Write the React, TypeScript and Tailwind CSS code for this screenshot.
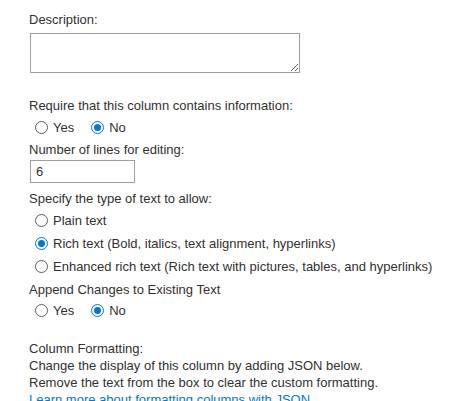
import { useState } from 'react';

function Radio({ label, checked, onClick }: { label: string; checked: boolean; onClick: () => void }) {
  return (
    <label className="inline-flex items-center gap-[5px] cursor-pointer" onClick={onClick}>
      <span
        className={`w-[13px] h-[13px] rounded-full border flex items-center justify-center ${
          checked ? 'border-[#0078d4]' : 'border-[#605e5c]'
        }`}
      >
        {checked && <span className="w-[7px] h-[7px] rounded-full bg-[#0078d4]" />}
      </span>
      <span>{label}</span>
    </label>
  );
}

export default function App() {
  const [required, setRequired] = useState('no');
  const [textType, setTextType] = useState('rich');
  const [append, setAppend] = useState('no');
  const [lines, setLines] = useState('6');

  return (
    <div
      className="min-h-screen bg-white text-[#323130] text-[13px] leading-[17px] pl-[29px] pt-[11px]"
      style={{ fontFamily: '"Liberation Sans", Arial, sans-serif' }}
    >
      {/* Description */}
      <div>Description:</div>
      <textarea className="block mt-[5px] ml-px w-[270px] h-[40px] border border-[#a19f9d] outline-none px-2 py-1" />

      {/* Required */}
      <div className="mt-[24px]">Require that this column contains information:</div>
      <div className="flex items-center h-[22px] mt-[2px] pl-[6px] gap-[17px]">
        <Radio label="Yes" checked={required === 'yes'} onClick={() => setRequired('yes')} />
        <Radio label="No" checked={required === 'no'} onClick={() => setRequired('no')} />
      </div>

      {/* Lines */}
      <div className="mt-[3px]">Number of lines for editing:</div>
      <input
        value={lines}
        onChange={(e) => setLines(e.target.value)}
        className="block mt-[2px] ml-px w-[105px] h-[23px] border border-[#a19f9d] outline-none px-[5px]"
      />

      {/* Text type */}
      <div className="mt-[7px]">Specify the type of text to allow:</div>
      <div className="flex flex-col pl-[6px] mt-[2px]">
        <div className="flex items-center h-[23px]">
          <Radio label="Plain text" checked={textType === 'plain'} onClick={() => setTextType('plain')} />
        </div>
        <div className="flex items-center h-[23px]">
          <Radio
            label="Rich text (Bold, italics, text alignment, hyperlinks)"
            checked={textType === 'rich'}
            onClick={() => setTextType('rich')}
          />
        </div>
        <div className="flex items-center h-[23px]">
          <Radio
            label="Enhanced rich text (Rich text with pictures, tables, and hyperlinks)"
            checked={textType === 'enhanced'}
            onClick={() => setTextType('enhanced')}
          />
        </div>
      </div>

      {/* Append */}
      <div className="mt-[3px]">Append Changes to Existing Text</div>
      <div className="flex items-center h-[22px] mt-px pl-[6px] gap-[17px]">
        <Radio label="Yes" checked={append === 'yes'} onClick={() => setAppend('yes')} />
        <Radio label="No" checked={append === 'no'} onClick={() => setAppend('no')} />
      </div>

      {/* Column formatting */}
      <div className="mt-[19px]">
        <div>Column Formatting:</div>
        <div>Change the display of this column by adding JSON below.</div>
        <div>Remove the text from the box to clear the custom formatting.</div>
        <a href="#" className="text-[#0078d4]">
          Learn more about formatting columns with JSON
        </a>
      </div>
    </div>
  );
}
